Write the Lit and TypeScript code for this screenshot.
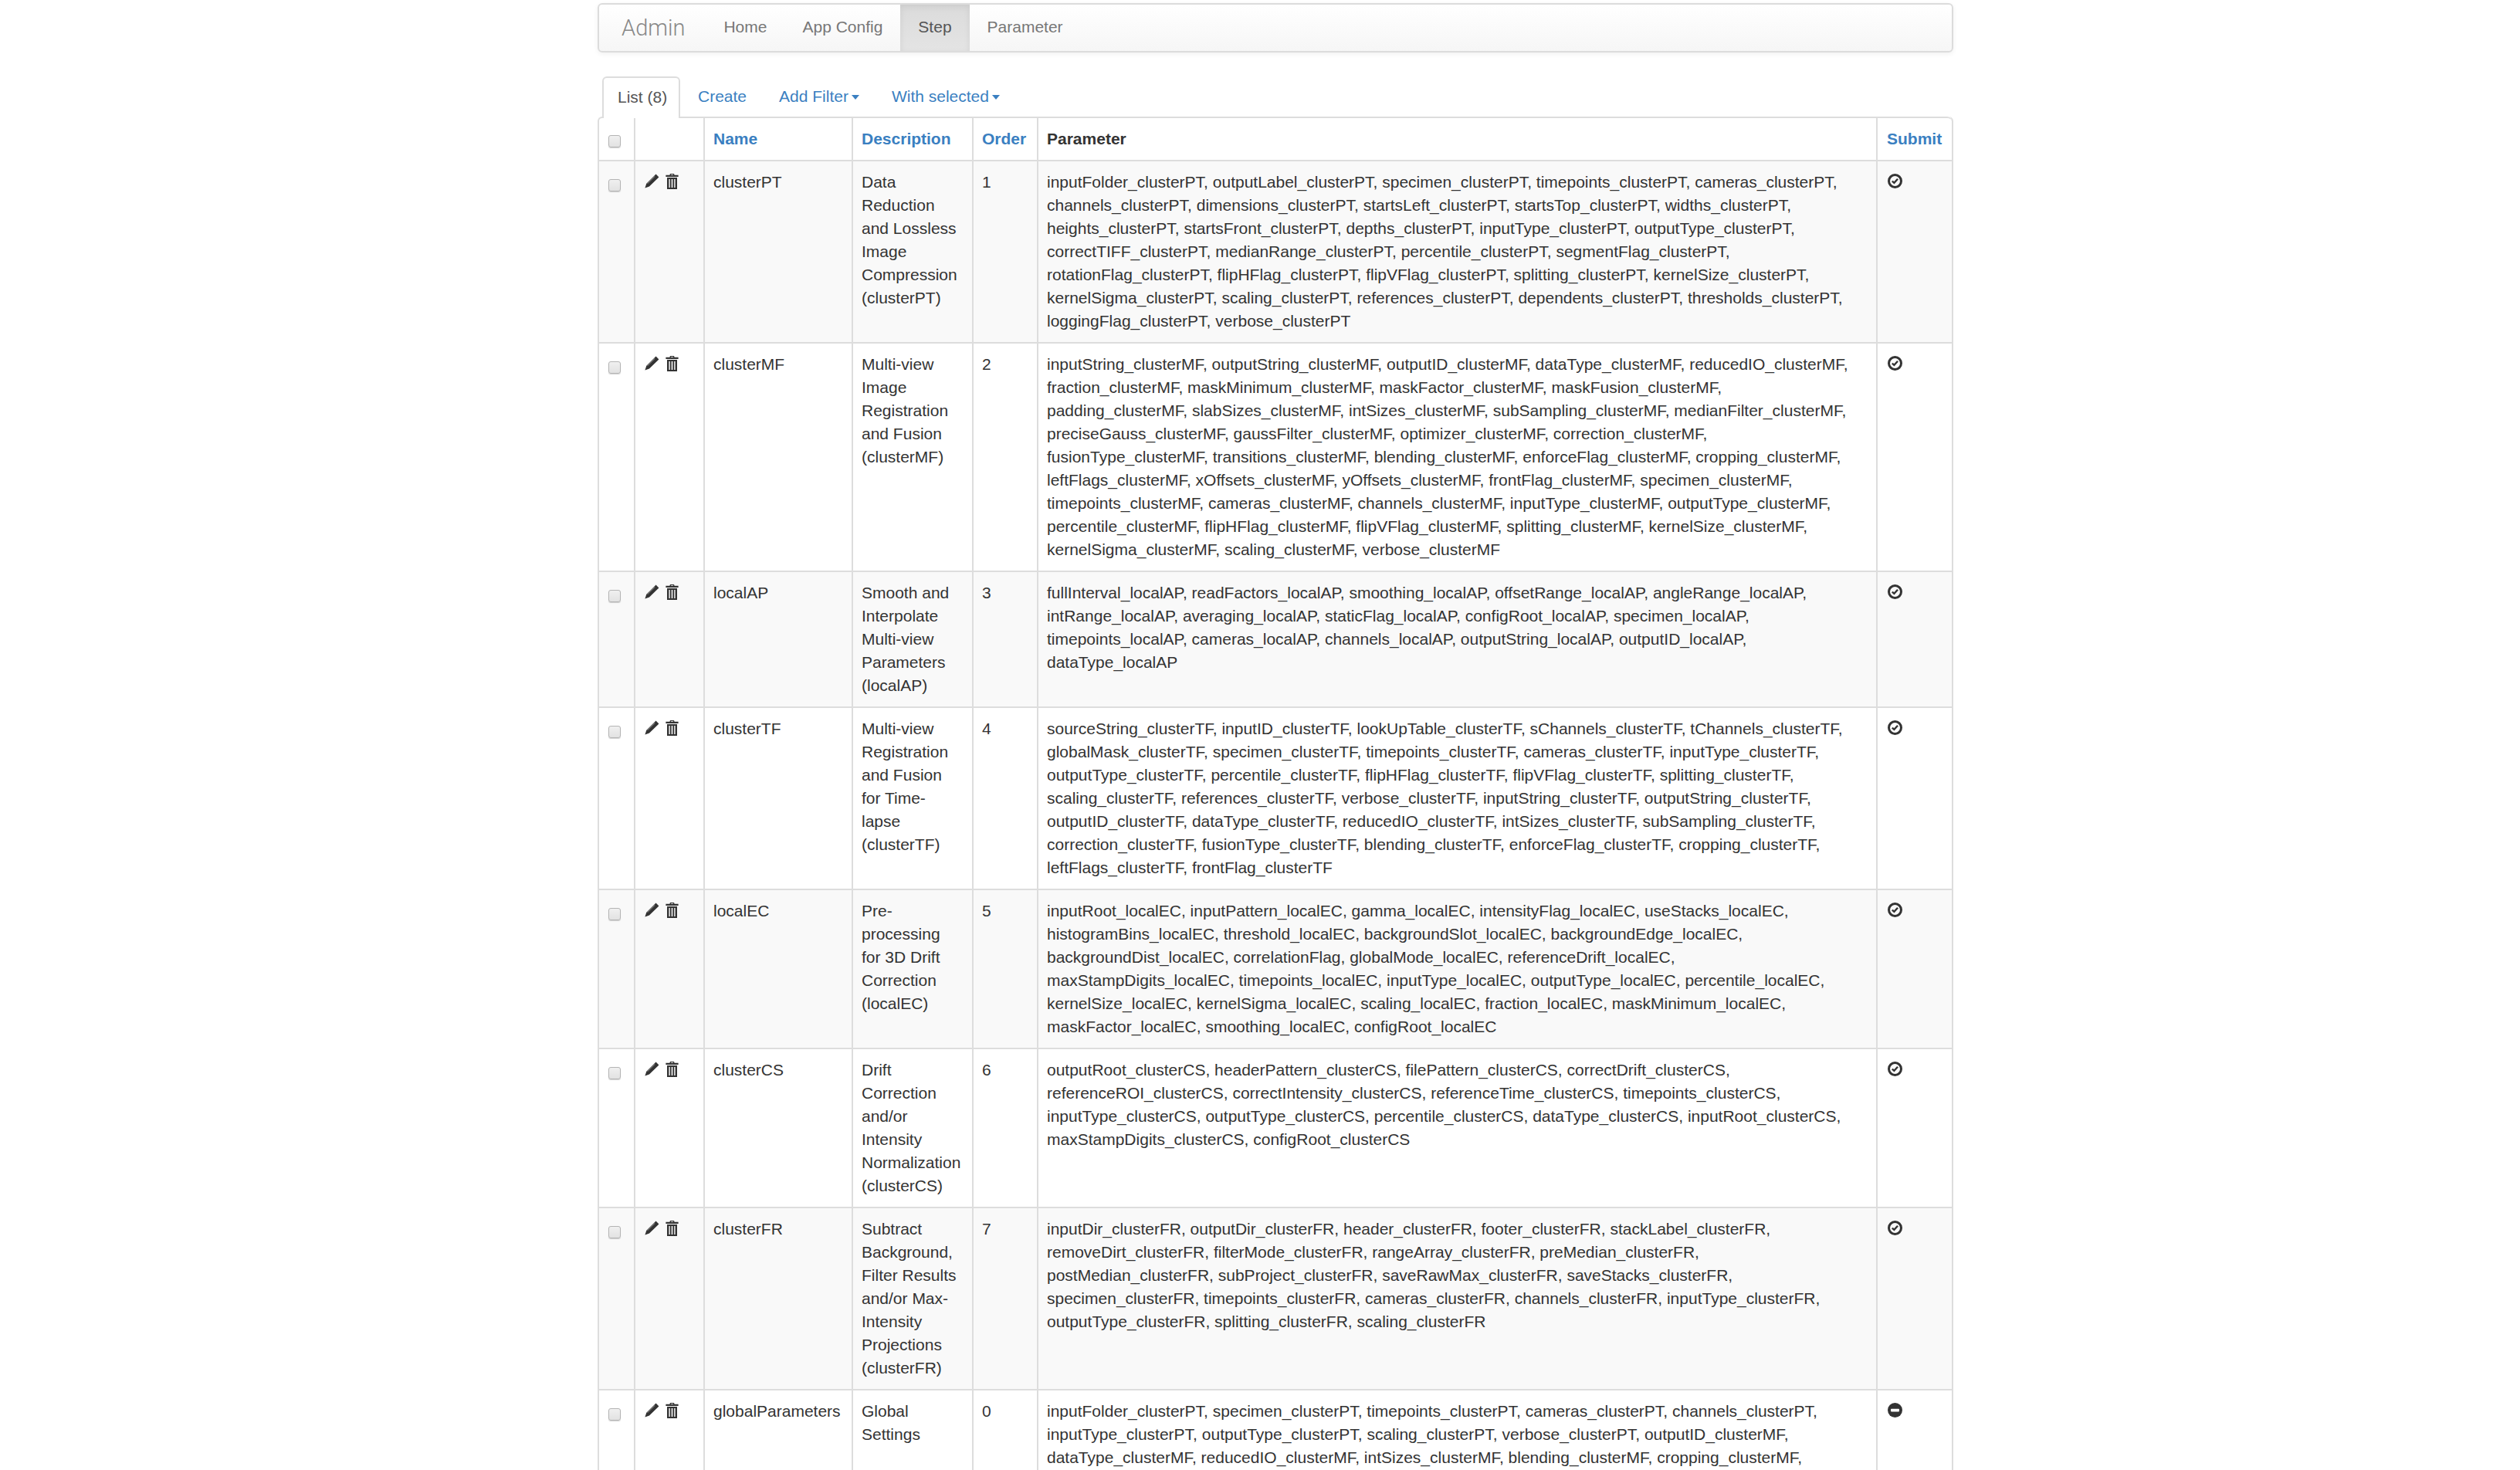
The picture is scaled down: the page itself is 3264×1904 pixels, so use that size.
import { LitElement, html, css, svg } from "lit";
import { customElement } from "lit/decorators.js";

interface Step {
  name: string;
  desc: string[];
  order: number;
  params: string[];
  off?: boolean;
}

const steps: Step[] = [
  {
    name: "clusterPT",
    desc: ["Data", "Reduction", "and Lossless", "Image", "Compression", "(clusterPT)"],
    order: 1,
    params: [
      "inputFolder_clusterPT, outputLabel_clusterPT, specimen_clusterPT, timepoints_clusterPT, cameras_clusterPT,",
      "channels_clusterPT, dimensions_clusterPT, startsLeft_clusterPT, startsTop_clusterPT, widths_clusterPT,",
      "heights_clusterPT, startsFront_clusterPT, depths_clusterPT, inputType_clusterPT, outputType_clusterPT,",
      "correctTIFF_clusterPT, medianRange_clusterPT, percentile_clusterPT, segmentFlag_clusterPT,",
      "rotationFlag_clusterPT, flipHFlag_clusterPT, flipVFlag_clusterPT, splitting_clusterPT, kernelSize_clusterPT,",
      "kernelSigma_clusterPT, scaling_clusterPT, references_clusterPT, dependents_clusterPT, thresholds_clusterPT,",
      "loggingFlag_clusterPT, verbose_clusterPT",
    ],
  },
  {
    name: "clusterMF",
    desc: ["Multi-view", "Image", "Registration", "and Fusion", "(clusterMF)"],
    order: 2,
    params: [
      "inputString_clusterMF, outputString_clusterMF, outputID_clusterMF, dataType_clusterMF, reducedIO_clusterMF,",
      "fraction_clusterMF, maskMinimum_clusterMF, maskFactor_clusterMF, maskFusion_clusterMF,",
      "padding_clusterMF, slabSizes_clusterMF, intSizes_clusterMF, subSampling_clusterMF, medianFilter_clusterMF,",
      "preciseGauss_clusterMF, gaussFilter_clusterMF, optimizer_clusterMF, correction_clusterMF,",
      "fusionType_clusterMF, transitions_clusterMF, blending_clusterMF, enforceFlag_clusterMF, cropping_clusterMF,",
      "leftFlags_clusterMF, xOffsets_clusterMF, yOffsets_clusterMF, frontFlag_clusterMF, specimen_clusterMF,",
      "timepoints_clusterMF, cameras_clusterMF, channels_clusterMF, inputType_clusterMF, outputType_clusterMF,",
      "percentile_clusterMF, flipHFlag_clusterMF, flipVFlag_clusterMF, splitting_clusterMF, kernelSize_clusterMF,",
      "kernelSigma_clusterMF, scaling_clusterMF, verbose_clusterMF",
    ],
  },
  {
    name: "localAP",
    desc: ["Smooth and", "Interpolate", "Multi-view", "Parameters", "(localAP)"],
    order: 3,
    params: [
      "fullInterval_localAP, readFactors_localAP, smoothing_localAP, offsetRange_localAP, angleRange_localAP,",
      "intRange_localAP, averaging_localAP, staticFlag_localAP, configRoot_localAP, specimen_localAP,",
      "timepoints_localAP, cameras_localAP, channels_localAP, outputString_localAP, outputID_localAP,",
      "dataType_localAP",
    ],
  },
  {
    name: "clusterTF",
    desc: ["Multi-view", "Registration", "and Fusion", "for Time-", "lapse", "(clusterTF)"],
    order: 4,
    params: [
      "sourceString_clusterTF, inputID_clusterTF, lookUpTable_clusterTF, sChannels_clusterTF, tChannels_clusterTF,",
      "globalMask_clusterTF, specimen_clusterTF, timepoints_clusterTF, cameras_clusterTF, inputType_clusterTF,",
      "outputType_clusterTF, percentile_clusterTF, flipHFlag_clusterTF, flipVFlag_clusterTF, splitting_clusterTF,",
      "scaling_clusterTF, references_clusterTF, verbose_clusterTF, inputString_clusterTF, outputString_clusterTF,",
      "outputID_clusterTF, dataType_clusterTF, reducedIO_clusterTF, intSizes_clusterTF, subSampling_clusterTF,",
      "correction_clusterTF, fusionType_clusterTF, blending_clusterTF, enforceFlag_clusterTF, cropping_clusterTF,",
      "leftFlags_clusterTF, frontFlag_clusterTF",
    ],
  },
  {
    name: "localEC",
    desc: ["Pre-", "processing", "for 3D Drift", "Correction", "(localEC)"],
    order: 5,
    params: [
      "inputRoot_localEC, inputPattern_localEC, gamma_localEC, intensityFlag_localEC, useStacks_localEC,",
      "histogramBins_localEC, threshold_localEC, backgroundSlot_localEC, backgroundEdge_localEC,",
      "backgroundDist_localEC, correlationFlag, globalMode_localEC, referenceDrift_localEC,",
      "maxStampDigits_localEC, timepoints_localEC, inputType_localEC, outputType_localEC, percentile_localEC,",
      "kernelSize_localEC, kernelSigma_localEC, scaling_localEC, fraction_localEC, maskMinimum_localEC,",
      "maskFactor_localEC, smoothing_localEC, configRoot_localEC",
    ],
  },
  {
    name: "clusterCS",
    desc: ["Drift", "Correction", "and/or", "Intensity", "Normalization", "(clusterCS)"],
    order: 6,
    params: [
      "outputRoot_clusterCS, headerPattern_clusterCS, filePattern_clusterCS, correctDrift_clusterCS,",
      "referenceROI_clusterCS, correctIntensity_clusterCS, referenceTime_clusterCS, timepoints_clusterCS,",
      "inputType_clusterCS, outputType_clusterCS, percentile_clusterCS, dataType_clusterCS, inputRoot_clusterCS,",
      "maxStampDigits_clusterCS, configRoot_clusterCS",
    ],
  },
  {
    name: "clusterFR",
    desc: ["Subtract", "Background,", "Filter Results", "and/or Max-", "Intensity", "Projections", "(clusterFR)"],
    order: 7,
    params: [
      "inputDir_clusterFR, outputDir_clusterFR, header_clusterFR, footer_clusterFR, stackLabel_clusterFR,",
      "removeDirt_clusterFR, filterMode_clusterFR, rangeArray_clusterFR, preMedian_clusterFR,",
      "postMedian_clusterFR, subProject_clusterFR, saveRawMax_clusterFR, saveStacks_clusterFR,",
      "specimen_clusterFR, timepoints_clusterFR, cameras_clusterFR, channels_clusterFR, inputType_clusterFR,",
      "outputType_clusterFR, splitting_clusterFR, scaling_clusterFR",
    ],
  },
  {
    name: "globalParameters",
    desc: ["Global", "Settings"],
    order: 0,
    off: true,
    params: [
      "inputFolder_clusterPT, specimen_clusterPT, timepoints_clusterPT, cameras_clusterPT, channels_clusterPT,",
      "inputType_clusterPT, outputType_clusterPT, scaling_clusterPT, verbose_clusterPT, outputID_clusterMF,",
      "dataType_clusterMF, reducedIO_clusterMF, intSizes_clusterMF, blending_clusterMF, cropping_clusterMF,",
    ],
  },
];

const pencil = svg`<svg class="ico pencil" viewBox="0 0 19 19" width="19" height="19">
  <path fill="#333" d="M14.6 .6 18.4 4.4 6 16.6 .4 18.6 2.3 12.8Z" />
  <path fill="#f4f4f4" d="M12.6 2.9 13.5 3.7 3.9 13.2 3.2 12.4Z" opacity=".35" />
</svg>`;

const trash = svg`<svg class="ico" viewBox="0 0 17 20" width="17" height="20">
  <path fill="#333" d="M6 0H11L11.6 1.8H16.6V4H.4V1.8H5.4ZM7 1 6.8 1.8H10.2L10 1Z" />
  <path fill="#333" fill-rule="evenodd" d="M2 5H15V20H2ZM4.4 7V18H5.8V7ZM7.7 7V18H9.3V7ZM11.2 7V18H12.6V7Z" />
</svg>`;

const okCircle = svg`<svg class="ico" viewBox="0 0 19 19" width="19" height="19">
  <circle cx="9.5" cy="9.5" r="8" fill="none" stroke="#333" stroke-width="3" />
  <path fill="none" stroke="#333" stroke-width="2.4" d="M5.8 9.6 8.4 11.8 13 6.8" />
</svg>`;

const minusCircle = svg`<svg class="ico" viewBox="0 0 19 19" width="19" height="19">
  <circle cx="9.5" cy="9.5" r="9.5" fill="#333" />
  <rect x="4" y="7.8" width="11" height="3.6" rx=".8" fill="#fff" />
</svg>`;

@customElement("app-root")
export class AppRoot extends LitElement {
  static styles = css`
    :host {
      display: block;
      height: 1904px;
      overflow: hidden;
      background: #fff;
      color: #333;
      font-family: "Liberation Sans", Arial, sans-serif;
      font-size: 21px;
      line-height: 30px;
      font-kerning: normal;
      text-rendering: optimizeLegibility;
    }
    .page {
      width: 1756px;
      margin-left: 774px;
      padding-top: 4px;
    }
    .navbar {
      display: flex;
      height: 64px;
      box-sizing: border-box;
      border: 2px solid #dcdcdc;
      border-radius: 6px;
      background: linear-gradient(to bottom, #fff, #f6f6f6);
      box-shadow: 0 2px 6px rgba(0, 0, 0, 0.06);
      overflow: hidden;
      color: #777;
    }
    .brand {
      font-family: Roboto, "Liberation Sans", sans-serif;
      font-size: 29px;
      font-weight: 300;
      line-height: 60px;
      padding: 0 27px 0 29px;
      color: #888;
    }
    .navbar a {
      line-height: 58px;
      padding: 0 23px;
      white-space: nowrap;
    }
    .navbar a.active {
      color: #555;
      background: linear-gradient(to bottom, #dbdbdb, #e4e4e4);
      box-shadow: inset 0 3px 9px rgba(0, 0, 0, 0.075);
    }
    .tabs {
      display: flex;
      margin: 31px 0 0 6px;
      height: 52px;
    }
    .tabs > div {
      line-height: 52px;
      padding: 0 21px;
      white-space: nowrap;
      color: #3a7fc1;
    }
    .tabs > .current {
      box-sizing: border-box;
      width: 101px;
      margin-right: 2px;
      padding: 0 18px;
      color: #555;
      background: #fff;
      border: 2px solid #ddd;
      border-bottom: none;
      border-radius: 6px 6px 0 0;
      position: relative;
      z-index: 1;
      height: 54px;
      line-height: 50px;
    }
    .caret {
      display: inline-block;
      margin-left: 4px;
      vertical-align: middle;
      border-top: 6px solid currentColor;
      border-left: 5.5px solid transparent;
      border-right: 5.5px solid transparent;
    }
    table {
      table-layout: fixed;
      border-collapse: separate;
      border-spacing: 0;
      width: 1754px;
      border-right: 2px solid #ddd;
      border-radius: 6px 6px 0 0;
    }
    th,
    td {
      box-sizing: border-box;
      border-top: 2px solid #ddd;
      border-left: 2px solid #ddd;
      padding: 12px 12px 12px 11px;
      text-align: left;
      vertical-align: top;
      font-weight: normal;
    }
    th {
      font-weight: bold;
      white-space: nowrap;
    }
    th:first-child {
      border-top-left-radius: 6px;
    }
    th:last-child {
      border-top-right-radius: 6px;
    }
    th.sortable {
      color: #3a7fc1;
    }
    th.submit {
      padding-left: 12px;
    }
    tbody tr:nth-child(odd) td {
      background: #f9f9f9;
    }
    .line {
      display: block;
      white-space: nowrap;
    }
    .check {
      appearance: none;
      display: block;
      box-sizing: border-box;
      width: 16px;
      height: 16px;
      margin: 11px 0 0 1px;
      border: 1px solid #b4b4b4;
      border-radius: 3px;
      background: linear-gradient(to bottom, #f0f0f0, #e2e2e2);
      box-shadow: 0 1px 1px rgba(0, 0, 0, 0.18);
    }
    th .check {
      margin-top: 10px;
    }
    .actions {
      display: flex;
      gap: 8px;
      margin: 4px 0 0 1px;
    }
    .ico {
      display: block;
      flex: none;
    }
    .status {
      margin-top: 4px;
      margin-left: 2px;
    }
    .c0 { width: 47px; }
    .c1 { width: 90px; }
    .c2 { width: 192px; }
    .c3 { width: 156px; }
    .c4 { width: 84px; }
    .c5 { width: 1087px; }
    .c6 { width: 98px; }
  `;

  private renderRow(s: Step) {
    return html`
      <tr>
        <td><input class="check" type="checkbox" /></td>
        <td><div class="actions">${pencil}${trash}</div></td>
        <td>${s.name}</td>
        <td>${s.desc.map((d) => html`<span class="line">${d}</span>`)}</td>
        <td>${s.order}</td>
        <td>${s.params.map((p) => html`<span class="line">${p}</span>`)}</td>
        <td><div class="status">${s.off ? minusCircle : okCircle}</div></td>
      </tr>
    `;
  }

  render() {
    return html`
      <div class="page">
        <nav class="navbar">
          <span class="brand">Admin</span>
          <a>Home</a>
          <a>App Config</a>
          <a class="active">Step</a>
          <a>Parameter</a>
        </nav>
        <div class="tabs">
          <div class="current">List (8)</div>
          <div>Create</div>
          <div>Add Filter<span class="caret"></span></div>
          <div>With selected<span class="caret"></span></div>
        </div>
        <table>
          <colgroup>
            <col class="c0" /><col class="c1" /><col class="c2" /><col class="c3" /><col class="c4" /><col class="c5" /><col class="c6" />
          </colgroup>
          <thead>
            <tr>
              <th><input class="check" type="checkbox" /></th>
              <th></th>
              <th class="sortable">Name</th>
              <th class="sortable">Description</th>
              <th class="sortable">Order</th>
              <th>Parameter</th>
              <th class="sortable submit">Submit</th>
            </tr>
          </thead>
          <tbody>${steps.map((s) => this.renderRow(s))}</tbody>
        </table>
      </div>
    `;
  }
}
